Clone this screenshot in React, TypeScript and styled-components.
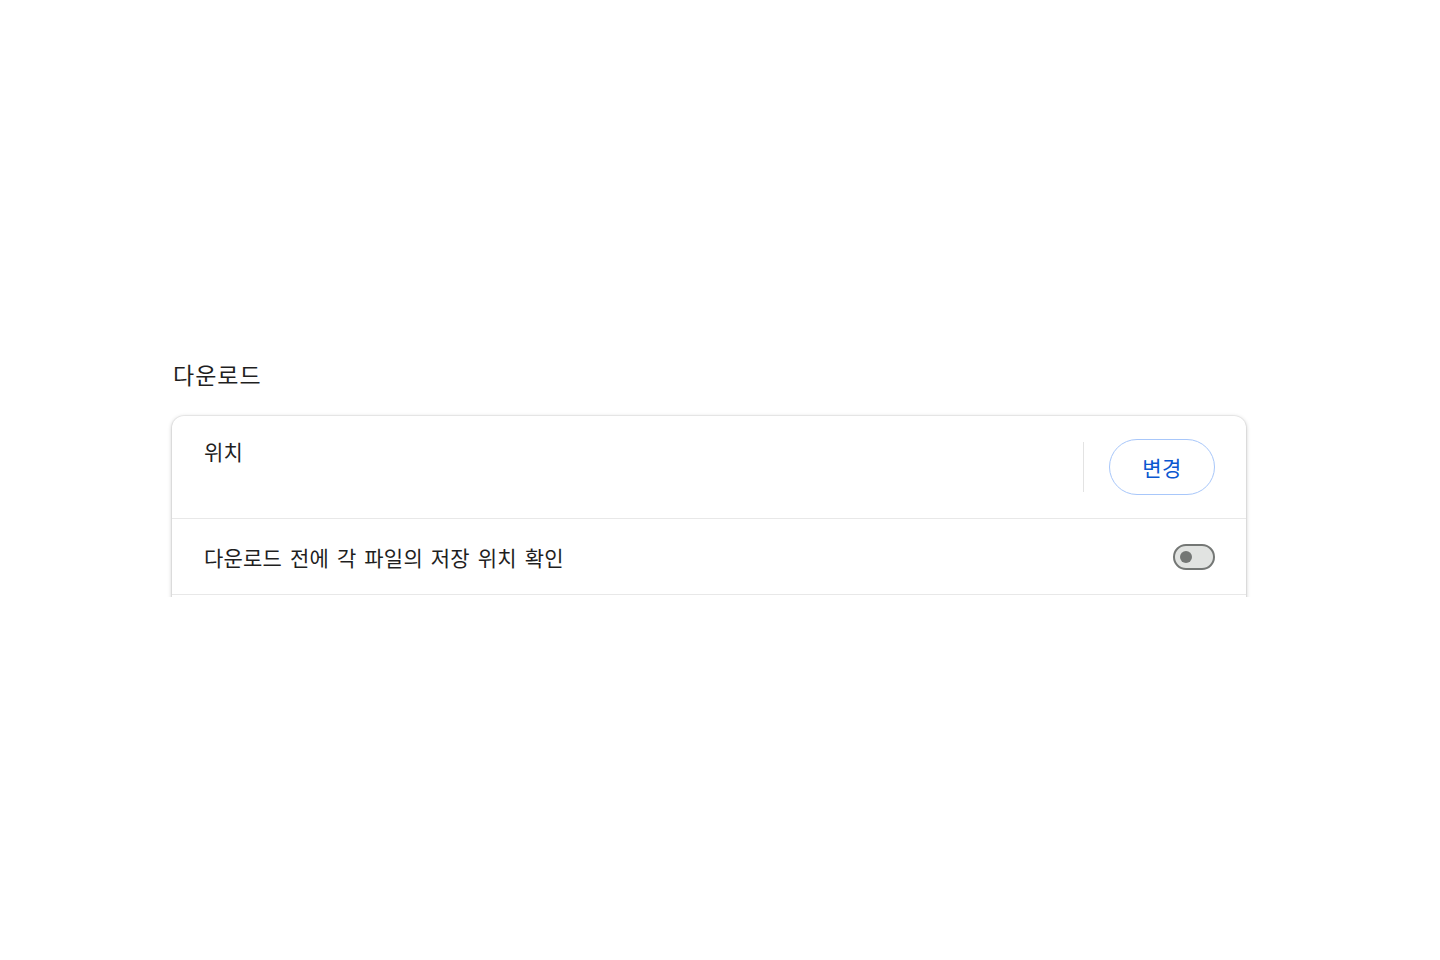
import React, { useState } from "react";
import styled, { createGlobalStyle } from "styled-components";

const GlobalStyle = createGlobalStyle`
  html, body {
    margin: 0;
    padding: 0;
    background: #ffffff;
  }
  body {
    font-family: "Noto Sans CJK KR", "Noto Sans", sans-serif;
    color: #1f1f1f;
  }
`;

// visible area of the settings page; the rest is scrolled off
const Viewport = styled.div`
  height: 597px;
  overflow: hidden;
`;

const Section = styled.section`
  width: 1074px;
  margin: 0 0 0 172px;
  padding-top: 358px;
`;

const SectionTitle = styled.h2`
  margin: 0 0 0 1px;
  font-size: 23px;
  font-weight: 400;
  line-height: 32px;
  letter-spacing: 1px;
`;

const Card = styled.div`
  margin-top: 26px;
  background: #ffffff;
  border-radius: 12px;
  box-shadow: 0 0 0 1px rgba(0, 0, 0, 0.04), 0 1px 4px rgba(0, 0, 0, 0.26);
`;

const Row = styled.div<{ $tall?: boolean }>`
  display: flex;
  align-items: ${(p) => (p.$tall ? "flex-start" : "center")};
  min-height: ${(p) => (p.$tall ? "102px" : "76px")};
  padding: 0 31px 0 32px;
  border-top: ${(p) => (p.$tall ? "none" : "1px solid #e8e8e8")};
  box-sizing: border-box;
`;

// start of the next setting row, below the fold
const RowTail = styled.div`
  height: 40px;
  border-top: 1px solid #e8e8e8;
`;

const Label = styled.div<{ $top?: boolean }>`
  flex: 1;
  font-size: 21px;
  line-height: 28px;
  letter-spacing: 0.2px;
  word-spacing: 3px;
  padding-top: ${(p) => (p.$top ? "21px" : "0")};
`;

const Controls = styled.div`
  display: flex;
  align-items: center;
  align-self: center;
  gap: 25px;
`;

const Divider = styled.div`
  width: 1px;
  height: 50px;
  background: #e3e3e3;
`;

const PillButton = styled.button`
  height: 56px;
  width: 106px;
  border: 1px solid #a8c7fa;
  border-radius: 28px;
  background: #ffffff;
  color: #0b57d0;
  font-family: "Noto Sans CJK KR", sans-serif;
  font-size: 21px;
  letter-spacing: 0.5px;
  cursor: pointer;
`;

const Toggle = styled.button<{ $on: boolean }>`
  position: relative;
  width: 42px;
  height: 26px;
  padding: 0;
  border: 2px solid #747775;
  border-radius: 13px;
  background: ${(p) => (p.$on ? "#0b57d0" : "#e1e3e1")};
  cursor: pointer;
  box-sizing: border-box;
`;

const Knob = styled.span<{ $on: boolean }>`
  position: absolute;
  top: 5px;
  left: ${(p) => (p.$on ? "21px" : "5px")};
  width: 12px;
  height: 12px;
  border-radius: 50%;
  background: ${(p) => (p.$on ? "#ffffff" : "#747775")};
`;

const App = (): JSX.Element => {
  const [askWhere, setAskWhere] = useState<boolean>(false);

  return (
    <>
      <GlobalStyle />
      <Viewport>
        <Section>
          <SectionTitle>다운로드</SectionTitle>
          <Card>
            <Row $tall>
              <Label $top>위치</Label>
              <Controls>
                <Divider />
                <PillButton>변경</PillButton>
              </Controls>
            </Row>
            <Row>
              <Label>다운로드 전에 각 파일의 저장 위치 확인</Label>
              <Toggle
                $on={askWhere}
                aria-pressed={askWhere}
                onClick={() => setAskWhere(!askWhere)}
              >
                <Knob $on={askWhere} />
              </Toggle>
            </Row>
            <RowTail />
          </Card>
        </Section>
      </Viewport>
    </>
  );
};

export default App;
